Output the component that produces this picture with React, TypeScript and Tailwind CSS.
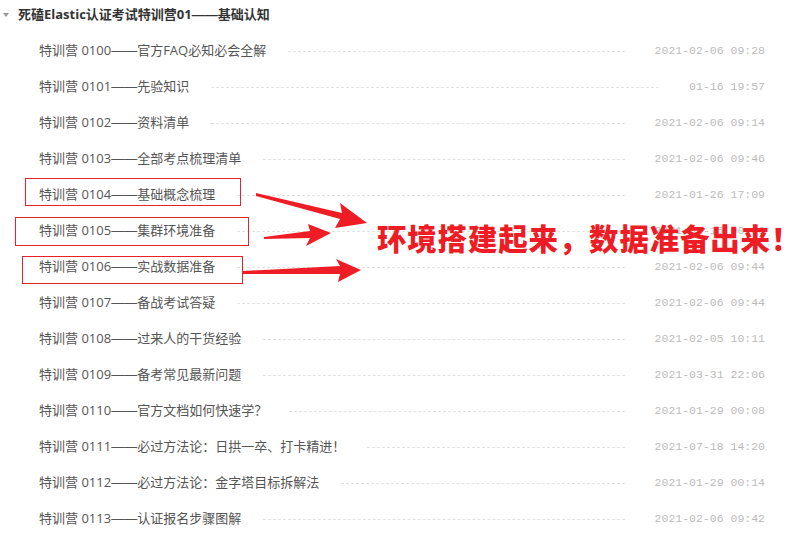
import React from 'react'

interface Lesson {
  no: string;
  title: string;
  time: string;
}

const lessons: Lesson[] = [
  { no: '0100', title: '官方FAQ必知必会全解', time: '2021-02-06 09:28' },
  { no: '0101', title: '先验知识', time: '01-16 19:57' },
  { no: '0102', title: '资料清单', time: '2021-02-06 09:14' },
  { no: '0103', title: '全部考点梳理清单', time: '2021-02-06 09:46' },
  { no: '0104', title: '基础概念梳理', time: '2021-01-26 17:09' },
  { no: '0105', title: '集群环境准备', time: '2021-01-15 00:06' },
  { no: '0106', title: '实战数据准备', time: '2021-02-06 09:44' },
  { no: '0107', title: '备战考试答疑', time: '2021-02-06 09:44' },
  { no: '0108', title: '过来人的干货经验', time: '2021-02-05 10:11' },
  { no: '0109', title: '备考常见最新问题', time: '2021-03-31 22:06' },
  { no: '0110', title: '官方文档如何快速学？', time: '2021-01-29 00:08' },
  { no: '0111', title: '必过方法论：日拱一卒、打卡精进！', time: '2021-07-18 14:20' },
  { no: '0112', title: '必过方法论：金字塔目标拆解法', time: '2021-01-29 00:14' },
  { no: '0113', title: '认证报名步骤图解', time: '2021-02-06 09:42' },
]

const cjk = "font-['Open_Sans','Noto_Sans_CJK_SC',sans-serif]"
// em dash at full 1em width
const dash = "font-['Liberation_Sans',sans-serif]"

const Row: React.FC<{ item: Lesson }> = ({ item }) => (
  <li className="h-[36px] flex items-center pl-[39px] pr-[35px]">
    <span className={`${cjk} text-[13px] text-[#555] whitespace-nowrap`}>
      特训营 {item.no}<span className={dash}>——</span>{item.title}
    </span>
    <span className="flex-1 ml-[22px] mr-[30px] border-t border-dashed border-[#e3e3e3]" />
    <span className="font-['Liberation_Mono',monospace] text-[11.5px] text-[#bbb] whitespace-nowrap">
      {item.time}
    </span>
  </li>
)

const App: React.FC = () => {
  return (
    <div className="relative w-[800px] h-[536px] bg-white overflow-hidden">
      <div className="h-[30px] flex items-center">
        <span className="ml-[3px] w-0 h-0 border-l-[3px] border-r-[3px] border-t-[4px] border-l-transparent border-r-transparent border-t-[#999]" />
        <h3 className={`${cjk} ml-[9px] text-[13px] font-bold text-[#333]`}>
          死磕Elastic认证考试特训营01<span className={dash}>——</span>基础认知
        </h3>
      </div>
      <ul className="mt-[3px]">
        {lessons.map(l => <Row key={l.no} item={l} />)}
      </ul>

      {/* annotation overlay */}
      <div className="absolute left-[25px] top-[178px] w-[216px] h-[28px] border border-[#e8202a]" />
      <div className="absolute left-[15px] top-[217px] w-[234px] h-[29px] border border-[#e8202a]" />
      <div className="absolute left-[22px] top-[256px] w-[221px] h-[28px] border border-[#e8202a]" />
      <svg className="absolute left-0 top-0" width="800" height="536">
        <polygon fill="#ee1d25" points="256,193 342,213 340,203 367,223 335,228 340,219 256,196" />
        <polygon fill="#ee1d25" points="264,237 310,231 308,224 331,233 306,246 310,238 264,239" />
        <polygon fill="#ee1d25" points="243,271 340,266 336,259 361,270 338,282 340,274 243,274" />
      </svg>
      <div className={`absolute left-[377px] top-[219px] ${cjk} text-[29.5px] leading-[40px] font-black text-[#ee1d25] whitespace-nowrap tracking-[0.8px]`}>
        环境搭建起来，数据准备出来！
      </div>
    </div>
  )
}

export default App
